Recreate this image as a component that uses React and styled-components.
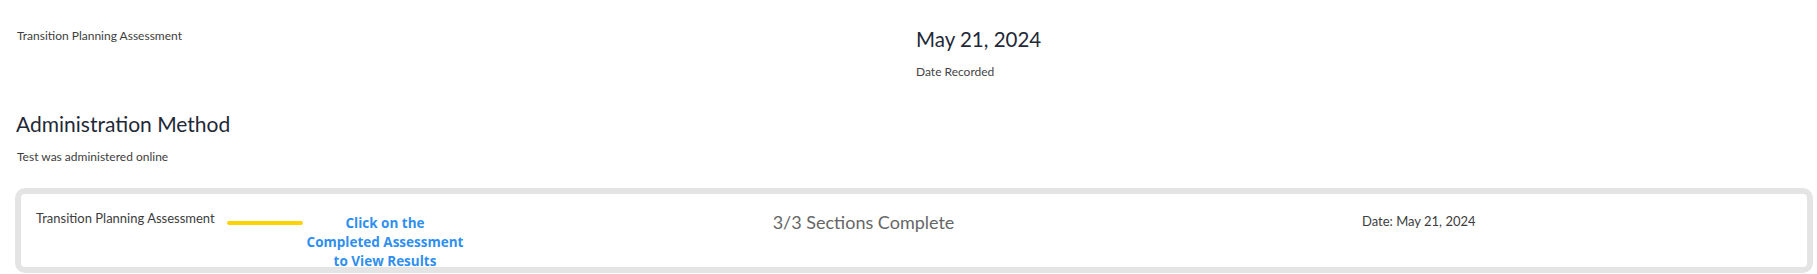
import React from "react";
import styled, { createGlobalStyle } from "styled-components";

const GlobalStyle = createGlobalStyle`
  html, body {
    margin: 0;
    padding: 0;
    background: #ffffff;
  }
  body {
    font-family: "Lato", "Open Sans", "Liberation Sans", sans-serif;
    color: #3a3a3a;
  }
`;

const Page = styled.div`
  width: 1817px;
  height: 274px;
  box-sizing: border-box;
  padding-top: 27px;
  overflow: hidden;
`;

const SummaryRow = styled.div`
  display: grid;
  grid-template-columns: 899px 1fr;
  padding-left: 17px;
`;

const Column = styled.div`
  display: flex;
  flex-direction: column;
  align-items: flex-start;
`;

const SmallText = styled.div`
  font-size: 12px;
  line-height: 18px;
  color: ${(p) => p.$color || "#3d3d3d"};
  margin-top: ${(p) => p.$mt || 0}px;
`;

const BigValue = styled.div`
  font-size: 20.5px;
  line-height: 24px;
  color: #1f2937;
`;

const Section = styled.section`
  margin-top: 31px;
  padding-left: 16px;
`;

const SectionTitle = styled.h2`
  margin: 0;
  font-weight: 400;
  font-size: 21px;
  line-height: 24px;
  color: #1f2937;
`;

const SectionBody = styled.div`
  padding-left: 1px;
  margin-top: 12px;
`;

const Card = styled.div`
  position: relative;
  box-sizing: border-box;
  height: 85px;
  margin: 22px 4px 0 15px;
  border: 6px solid #e4e4e4;
  border-radius: 10px;
  background: #ffffff;
  padding: 15px 3px 0 15px;
  display: grid;
  grid-template-columns: 5fr 4fr 3fr;
  align-items: start;
`;

const CardCell = styled.div`
  font-size: ${(p) => p.$size || 13}px;
  line-height: 1.5;
  color: ${(p) => p.$color || "#3d3d3d"};
  padding-top: ${(p) => p.$pt || 0}px;
`;

const Pointer = styled.div`
  position: absolute;
  left: 206px;
  top: 27px;
  width: 76px;
  height: 4px;
  border-radius: 2px;
  background: #ffd200;
`;

const Callout = styled.div`
  position: absolute;
  left: 279px;
  top: 20px;
  width: 170px;
  text-align: center;
  font-family: "Open Sans", "Liberation Sans", sans-serif;
  font-weight: 700;
  font-size: 13.5px;
  line-height: 19px;
  color: #2f8ff0;
`;

export default function App() {
  return (
    <>
      <GlobalStyle />
      <Page>
        <SummaryRow>
          <Column>
            <SmallText>Transition Planning Assessment</SmallText>
          </Column>
          <Column>
            <BigValue>May 21, 2024</BigValue>
            <SmallText $mt={12} $color="#444">Date Recorded</SmallText>
          </Column>
        </SummaryRow>

        <Section>
          <SectionTitle>Administration Method</SectionTitle>
          <SectionBody>
            <SmallText>Test was administered online</SmallText>
          </SectionBody>
        </Section>

        <Card>
          <CardCell>Transition Planning Assessment</CardCell>
          <CardCell $size={18} $color="#666666">
            3/3 Sections Complete
          </CardCell>
          <CardCell $pt={3}>Date: May 21, 2024</CardCell>
          <Pointer />
          <Callout>
            Click on the
            <br />
            Completed Assessment
            <br />
            to View Results
          </Callout>
        </Card>
      </Page>
    </>
  );
}
